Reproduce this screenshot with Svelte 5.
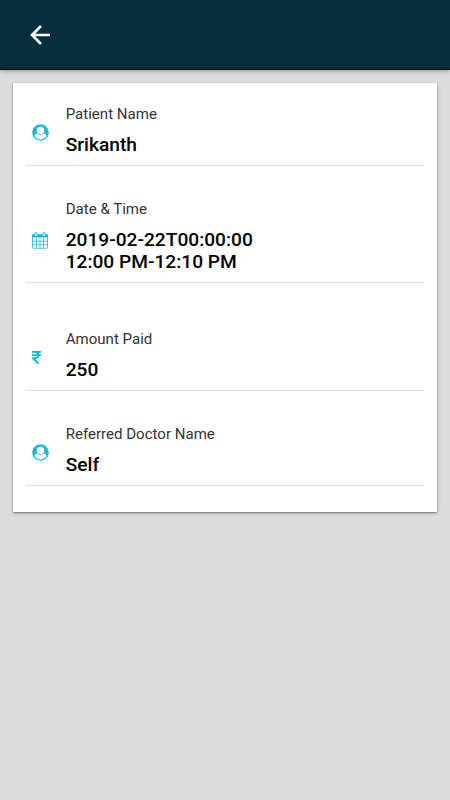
<script lang="ts">
	type Row = {
		icon: 'person' | 'calendar' | 'rupee';
		label: string;
		lines: string[];
		size?: string;
	};

	const rows: Row[] = [
		{ icon: 'person', label: 'Patient Name', lines: ['Srikanth'], size: 'first' },
		{ icon: 'calendar', label: 'Date & Time', lines: ['2019-02-22T00:00:00', '12:00 PM-12:10 PM'] },
		{ icon: 'rupee', label: 'Amount Paid', lines: ['250'], size: 'spaced' },
		{ icon: 'person', label: 'Referred Doctor Name', lines: ['Self'] }
	];
</script>

<div class="page">
	<header>
		<button aria-label="Back">
			<svg width="20" height="20" viewBox="0 0 20 20">
				<path d="M20 10H2M11 1L2 10l9 9" fill="none" stroke="#fff" stroke-width="2.6" />
			</svg>
		</button>
	</header>

	<main>
		<div class="card">
			{#each rows as row}
				<div class="row {row.size ?? ''}">
					<div class="icon {row.icon}">
						{#if row.icon === 'person'}
							<svg width="17" height="17" viewBox="0 0 17 17">
								<circle cx="8.5" cy="8.5" r="8.3" fill="#18b9d6" />
								<path
									d="M2.500 12.300C2.800 10.400 4.100 9.400 5.600 9.200h5.800c1.500.2 2.800 1.200 3.100 3.100-1.300 2-3.500 3.200-6 3.200s-4.700-1.200-6-3.200z"
									fill="#fff"
								/>
								<circle cx="8.5" cy="6.500" r="4.200" fill="#fff" stroke="#18b9d6" stroke-width=".8" />
							</svg>
						{:else if row.icon === 'calendar'}
							<svg width="16" height="17" viewBox="0 0 16 17">
								<path d="M0 3.200Q0 2.200 1 2.200H15Q16 2.200 16 3.200V5.500H0z" fill="#18b9d6" />
								<path
									d="M.5 5v10.300q0 1 1 1h13q1 0 1-1V5M4.400 6v10M8 6v10M11.600 6v10M.5 9.200h15M.5 12.700h15"
									fill="none"
									stroke="#35bfd8"
									stroke-width=".9"
								/>
								<rect x="2.800" y=".5" width="2.400" height="4" rx="1.200" fill="#fff" stroke="#18b9d6" />
								<rect x="10.800" y=".5" width="2.400" height="4" rx="1.200" fill="#fff" stroke="#18b9d6" />
							</svg>
						{:else}
							<svg width="9" height="13" viewBox="0 0 9 13">
								<path
									d="M0 .9h9M0 4.200h9M0 .9h2.500c5.300 0 5.300 6.300 0 6.300H.7L6.700 12.600"
									fill="none"
									stroke="#10b5d5"
									stroke-width="1.800"
								/>
							</svg>
						{/if}
					</div>
					<div class="text">
						<div class="label">{row.label}</div>
						{#each row.lines as line}
							<div class="value">{line}</div>
						{/each}
					</div>
				</div>
			{/each}
		</div>
	</main>
</div>

<style>
	:global(body) {
		background: #ddd;
	}

	.page {
		min-height: 800px;
		background: #ddd;
		font-family: Roboto, sans-serif;
	}

	header {
		height: 70px;
		box-sizing: border-box;
		display: flex;
		align-items: center;
		padding-left: 30px;
		background: #082d3f;
		border-bottom: 1px solid #000b12;
		box-shadow: 0 1px 5px rgba(0, 0, 0, 0.32);
	}

	button {
		display: flex;
		padding: 0;
		border: 0;
		background: none;
	}

	main {
		padding: 13.4px 13px;
	}

	.card {
		padding: 0 13px 26px;
		background: #fff;
		border-radius: 1px;
		box-shadow:
			0 1px 2px rgba(0, 0, 0, 0.42),
			0 1px 5px rgba(0, 0, 0, 0.16);
	}

	.row {
		display: flex;
		align-items: center;
		padding: 34px 0 9px;
		border-bottom: 1px solid #dedede;
	}

	.row.first {
		padding-top: 22px;
	}

	.row.spaced {
		padding-top: 47px;
	}

	.icon {
		display: flex;
		width: 34px;
		padding: 4px 0 0 6px;
		box-sizing: border-box;
		margin-right: 5.7px;
	}

	.icon.calendar {
		padding-top: 7px;
	}

	.icon.rupee {
		padding-top: 3px;
	}

	.label {
		margin-bottom: 11px;
		font-size: 15.05px;
		line-height: 18px;
		color: #333;
	}

	.value {
		font-size: 19.15px;
		font-weight: 500;
		line-height: 22px;
		color: #000;
	}
</style>
